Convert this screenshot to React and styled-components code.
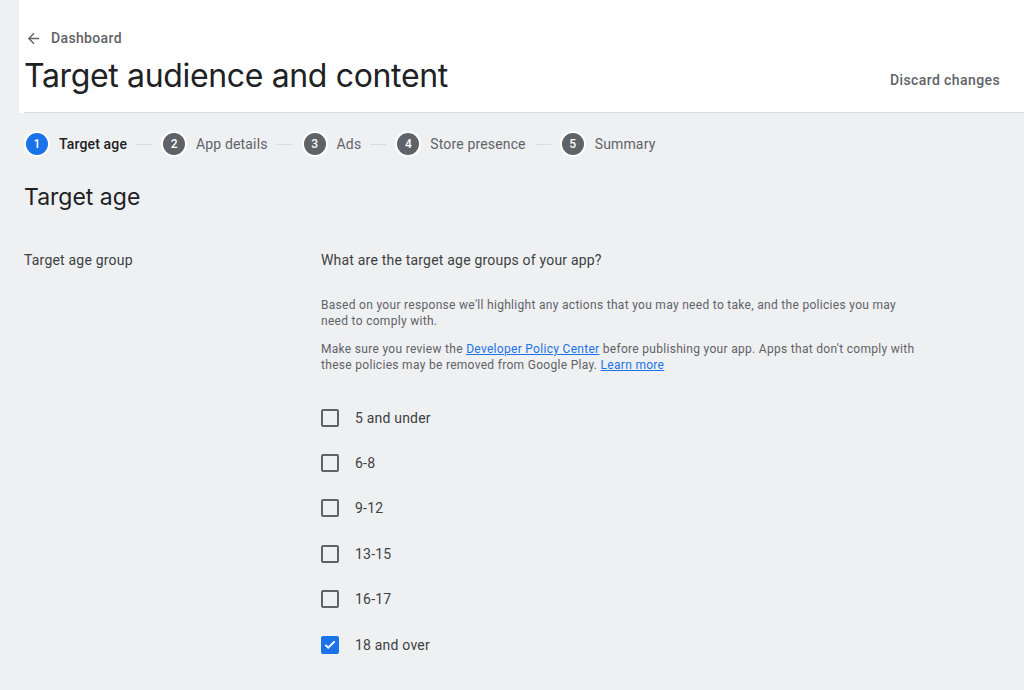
import React from 'react'
import styled, { createGlobalStyle } from 'styled-components'

const GlobalStyle = createGlobalStyle`
    html, body {
        margin: 0;
        padding: 0;
        background: #eff0f2;
        font-family: Roboto, "Liberation Sans", sans-serif;
        color: #202124;
    }
`

const Page = styled.div`
    display: flex;
    min-height: 690px;
`

const Rail = styled.div`
    width: 19px;
    flex-shrink: 0;
    background: #eff0f2;
`

const Main = styled.div`
    flex: 1;
    display: flex;
    flex-direction: column;
`

const Header = styled.header`
    background: #fff;
    padding-left: 5px;
`

const HeaderInner = styled.div`
    height: 112px;
    display: flex;
    align-items: flex-end;
    justify-content: space-between;
    border-bottom: 1px solid #dadce0;
    padding-right: 24px;
`

const TitleBlock = styled.div`
    display: flex;
    flex-direction: column;
    padding-bottom: 16px;
`

const BackLink = styled.a`
    display: flex;
    align-items: center;
    gap: 9px;
    color: #5f6368;
    font-size: 14px;
    font-weight: 500;
    letter-spacing: 0.35px;
    text-decoration: none;
    height: 20px;
    margin-bottom: 8px;
    margin-left: 1px;
`

const Title = styled.h1`
    margin: 0;
    font-family: Inter, Roboto, sans-serif;
    font-weight: 400;
    font-size: 32px;
    letter-spacing: -0.35px;
    line-height: 40px;
    color: #202124;
`

const DiscardButton = styled.button`
    background: transparent;
    border: none;
    color: #5f6368;
    font-family: Roboto, sans-serif;
    font-size: 14px;
    font-weight: 500;
    letter-spacing: 0.4px;
    line-height: 20px;
    padding: 0;
    margin-bottom: 22px;
    cursor: pointer;
`

const Content = styled.div`
    padding: 0 24px 0 5px;
`

const Stepper = styled.ol`
    display: flex;
    align-items: center;
    list-style: none;
    margin: 0;
    padding: 18px 0 0 0;
    height: 26px;
`

const Step = styled.li`
    display: flex;
    align-items: center;
    gap: 9px;
`

const StepNumber = styled.span`
    width: 22px;
    height: 22px;
    border-radius: 50%;
    border: 2px solid #fff;
    background: ${p => (p.$active ? '#1a73e8' : '#5f6368')};
    color: #fff;
    font-size: 12px;
    font-weight: 500;
    display: flex;
    align-items: center;
    justify-content: center;
`

const StepLabel = styled.span`
    font-size: 14px;
    letter-spacing: 0.15px;
    font-weight: ${p => (p.$active ? 500 : 400)};
    color: ${p => (p.$active ? '#202124' : '#5f6368')};
`

const Connector = styled.span`
    width: 16px;
    height: 1px;
    background: #dadce0;
    margin: 0 9px;
`

const SectionTitle = styled.h2`
    margin: 25px 0 0 0;
    font-family: Inter, Roboto, sans-serif;
    font-weight: 400;
    font-size: 23px;
    line-height: 30px;
    color: #202124;
`

const FormRow = styled.div`
    display: grid;
    grid-template-columns: 297px 600px;
    margin-top: 38px;
`

const FieldLabel = styled.div`
    font-size: 14px;
    line-height: 20px;
    letter-spacing: 0.2px;
    color: #3c4043;
`

const Question = styled.div`
    font-size: 14px;
    line-height: 20px;
    letter-spacing: 0.2px;
    color: #3c4043;
`

const Help = styled.p`
    font-size: 12px;
    line-height: 16px;
    letter-spacing: 0.3px;
    color: #5f6368;
    margin: ${p => p.$first ? '27px' : '12px'} 0 0 0;
`

const Link = styled.a`
    color: #1a73e8;
    text-decoration: underline;
`

const Options = styled.div`
    display: flex;
    flex-direction: column;
    margin-top: 22px;
`

const Option = styled.label`
    display: flex;
    align-items: center;
    gap: 16px;
    height: 45.4px;
    font-size: 14px;
    letter-spacing: 0.2px;
    color: #3c4043;
    cursor: pointer;
`

const Box = styled.span`
    width: 18px;
    height: 18px;
    box-sizing: border-box;
    border-radius: 2px;
    border: 2px solid ${p => (p.$checked ? '#1a73e8' : '#5f6368')};
    background: ${p => (p.$checked ? '#1a73e8' : 'transparent')};
    display: flex;
    align-items: center;
    justify-content: center;
`

const steps = ['Target age', 'App details', 'Ads', 'Store presence', 'Summary']
const ages = ['5 and under', '6-8', '9-12', '13-15', '16-17', '18 and over']

export default function App() {
    const [checked, setChecked] = React.useState({ '18 and over': true })

    return (
        <>
            <GlobalStyle />
            <Page>
                <Rail />
                <Main>
                    <Header>
                        <HeaderInner>
                            <TitleBlock>
                                <BackLink href="#">
                                    <svg width="17" height="17" viewBox="0 0 24 24" fill="#5f6368">
                                        <path d="M20 11H7.83l5.59-5.59L12 4l-8 8 8 8 1.41-1.41L7.83 13H20v-2z" />
                                    </svg>
                                    Dashboard
                                </BackLink>
                                <Title>Target audience and content</Title>
                            </TitleBlock>
                            <DiscardButton>Discard changes</DiscardButton>
                        </HeaderInner>
                    </Header>
                    <Content>
                        <Stepper>
                            {steps.map((s, i) => (
                                <React.Fragment key={s}>
                                    {i > 0 && <Connector />}
                                    <Step>
                                        <StepNumber $active={i === 0}>{i + 1}</StepNumber>
                                        <StepLabel $active={i === 0}>{s}</StepLabel>
                                    </Step>
                                </React.Fragment>
                            ))}
                        </Stepper>
                        <SectionTitle>Target age</SectionTitle>
                        <FormRow>
                            <FieldLabel>Target age group</FieldLabel>
                            <div>
                                <Question>What are the target age groups of your app?</Question>
                                <Help $first>
                                    Based on your response we'll highlight any actions that you may need to take, and the policies you may need to comply with.
                                </Help>
                                <Help>
                                    Make sure you review the <Link href="#">Developer Policy Center</Link> before publishing your app. Apps that don't comply with these policies may be removed from Google Play. <Link href="#">Learn more</Link>
                                </Help>
                                <Options>
                                    {ages.map(a => (
                                        <Option key={a} onClick={() => setChecked({ ...checked, [a]: !checked[a] })}>
                                            <Box $checked={checked[a]}>
                                                {checked[a] && (
                                                    <svg width="15" height="15" viewBox="0 0 24 24" fill="none" stroke="#fff" strokeWidth="3.2">
                                                        <path d="M4 12.5l5 5L20 6.5" />
                                                    </svg>
                                                )}
                                            </Box>
                                            {a}
                                        </Option>
                                    ))}
                                </Options>
                            </div>
                        </FormRow>
                    </Content>
                </Main>
            </Page>
        </>
    )
}
